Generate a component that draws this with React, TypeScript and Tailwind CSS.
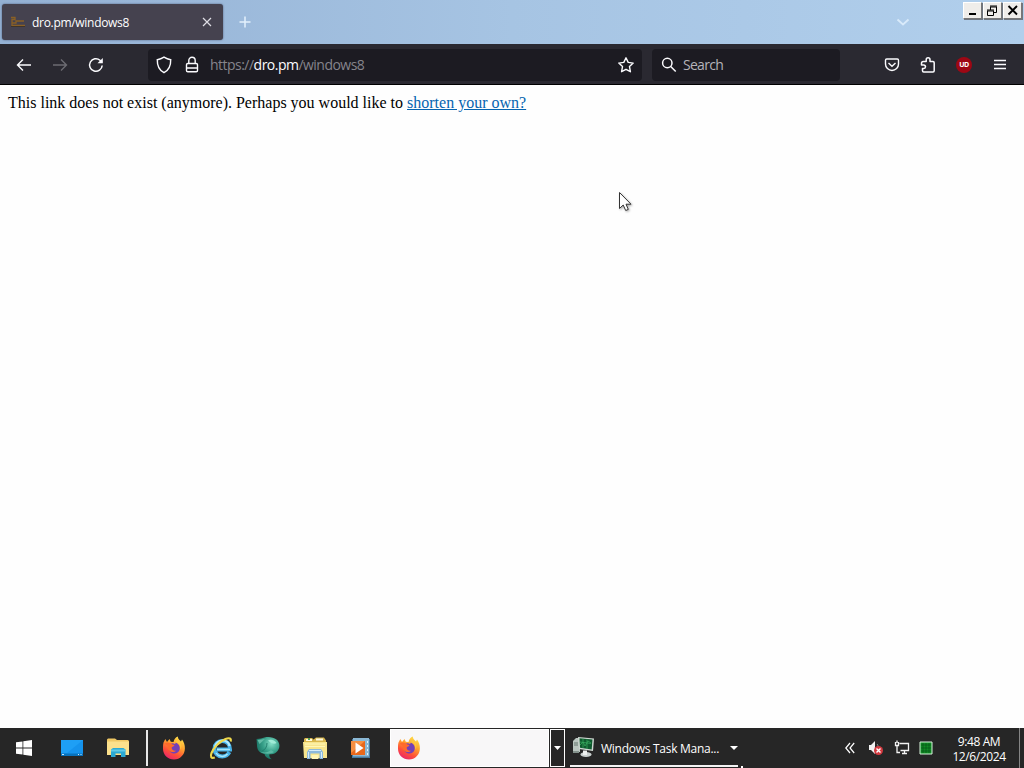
import type { ReactNode } from "react";

const uiFont = "font-['Open_Sans','Noto_Sans',sans-serif]";

function FirefoxIcon() {
  return (
    <svg width="24" height="24" viewBox="0 0 24 24">
      <defs>
        <linearGradient id="fox" x1="0.8" y1="0.05" x2="0.3" y2="1">
          <stop offset="0" stopColor="#ffe14a" />
          <stop offset="0.4" stopColor="#ff9a2e" />
          <stop offset="0.7" stopColor="#ff5038" />
          <stop offset="1" stopColor="#e8246c" />
        </linearGradient>
      </defs>
      <path
        d="M1.500 6.500 3.300 3l1.700 3L7.500 3l1.300 2.800 2.700.2c.7-3 2-4.800 4.300-5.500.1 2.500 2 3.500 3.200 5l1-2c2 2.400 3 5.800 2.900 9C22.800 18.800 18 23.500 12 23.500S1 19 1 12.700c0-2.400 0-4.200.5-6.200Z"
        fill="url(#fox)"
      />
      <path d="M8 8.500c1.500-1.500 3.500-1.500 5-.5l1-1.500c3 1.500 4.500 4.500 3.500 7.500-.8 2.300-2.700 3.500-5 3.500-3 0-5.500-2-5.500-5 0-1.500.3-3 1-4Z" fill="#7440b8" />
      <path
        d="M2.500 7.500c2.500-1.700 5.700-1.400 8 1l2 .4c-.4 1.500-2.500 1.600-2.800 2.400-.4 2.500 2 4 4.400 3.400-1.500 1.800-5 2-6.900-.2C5 12.300 5.800 10 5.800 10Z"
        fill="#ff6a2b"
      />
      <path d="M14 6.500c3.500.4 5 3.500 4 7 2-1.500 2-5.500-.4-8.200L15.500 3Z" fill="#ffc53d" />
    </svg>
  );
}

function StartIcon() {
  return (
    <svg width="16" height="16" viewBox="0 0 16 16" fill="#fff">
      <path d="M0 2.300 6.500 1.400V7.500H0ZM7.300 1.300 16 0v7.500H7.300ZM0 8.400h6.500v6.200L0 13.700ZM7.300 8.400H16V16l-8.700-1.300Z" />
    </svg>
  );
}

function DesktopIcon() {
  return (
    <svg width="22" height="16" viewBox="0 0 22 16">
      <path d="M0 0h22v16H0Z" fill="#1593ed" />
      <path d="M0 0h22L6 13H0Z" fill="#1e9ff5" />
      <path d="M0 13.500h22V16H0Z" fill="#0872bd" />
      <path d="M1 14.500h2M17 14.500h1M19.500 14.500h1" stroke="#c9eaff" />
    </svg>
  );
}

function ExplorerIcon() {
  return (
    <svg width="22" height="20" viewBox="0 0 22 20">
      <path d="M0 1.500 1 .5h7l2 1.500h11l1 1V17H0Z" fill="#f0c865" />
      <path d="M0 3.500h22V17H0Z" fill="#fbe08c" />
      <path d="M4 11.500 6 10h10.500l2 1.500V19H14v-3.500H8.500V19H4Z" fill="#2ba9d3" />
      <path d="M4 11.500h14.500v2H4Z" fill="#62cae6" />
    </svg>
  );
}

function InternetExplorerIcon() {
  return (
    <svg width="24" height="24" viewBox="0 0 24 24" fill="none">
      <path
        d="M20.300 16.200c-1.300 2.700-4 4.300-7 4.300-4.400 0-7.800-3.400-7.800-7.800S8.900 5 13.300 5c4.700 0 7.700 3.400 7.700 8.500H8"
        stroke="#48b3e8"
        strokeWidth="4"
      />
      <path d="M6 11c.7-4 4-6.500 7.300-6.500 3.500 0 6.500 2 7.200 5.500" stroke="#b5ebff" strokeWidth="2.200" />
      <path d="M8 13.500h13M7 17c2 3.500 8 5 11.500 1" stroke="#a8e6fb" strokeWidth="1.500" />
      <path
        d="M21.500 5.500c1.200-3-1-4.200-5-2.500C10 5.700 4.500 12 2.500 17c-1.400 3.700-.5 5.800 3.300 4.500"
        stroke="#f0d94c"
        strokeWidth="2.100"
      />
    </svg>
  );
}

function OrbIcon() {
  return (
    <svg width="24" height="24" viewBox="0 0 24 24">
      <defs>
        <radialGradient id="orb" cx="0.65" cy="0.3" r="0.75">
          <stop offset="0" stopColor="#86e0c8" />
          <stop offset="0.5" stopColor="#369f88" />
          <stop offset="1" stopColor="#12695c" />
        </radialGradient>
      </defs>
      <path
        d="M.5 3 5 2.500C10 0 17 .5 20.500 3.500c4 3.500 4 9.500-.5 13-2.400 1.700-5 2-6.500 1.800-.7 2 .5 3.700 2.300 5-4.300-.4-6.800-2.300-7.300-5.300C3.500 17 1 14 1 9.500Z"
        fill="url(#orb)"
      />
      <path d="M6 15c3-1 5-4 5-8" stroke="#23806f" fill="none" />
      <path d="M1.500 4 9 3 3.500 8Z" fill="#63bba6" />
      <path d="M12 4.500c3-1.500 6-.5 8.500 2.500-2 1.500-5 1-8.500-2.500Z" fill="#a0ecd7" />
      <path d="M3 15c3 2 9 2 12-1l3 2c-3 2-9 3-15-1Z" fill="#5cb8a4" />
    </svg>
  );
}

function LibraryFolderIcon() {
  return (
    <svg width="24" height="23" viewBox="0 0 24 23">
      <path d="M1 2 2 1h7l1.500 1.500L13 .5h8l2 3V21H1Z" fill="#d9b74d" />
      <path d="M3 2h6v2H3ZM13 1.500h7v2h-7Z" fill="#fffbe0" />
      <path d="M5 1h2v2H5Z" fill="#4f9e54" />
      <path d="M0 5h24v16H1Z" fill="#f7e58e" />
      <path d="M2 7h20M2 9.500h20" stroke="#fff7b9" />
      <path d="M4 15 6 12h12l2 3v7h-3.500v-5.500h-9V22H4Z" fill="#8cb9dc" />
      <path d="M6 13.500h12M5.500 15v6M18.500 15v6" stroke="#d5ecfa" />
      <path d="M8.500 18h7v4h-7Z" fill="#fff5b6" />
    </svg>
  );
}

function MediaPlayerIcon() {
  return (
    <svg width="22" height="21" viewBox="0 0 22 21">
      <path d="M2 1h18v19H2Z" fill="#47799f" />
      <path d="M3 0h16v18.500H3Z" fill="#8bb8d5" />
      <path d="M17 3h1v2h-1ZM17 7h1v2h-1ZM17 11h1v2h-1ZM17 15h1v2h-1Z" fill="#dcf2fd" />
      <path d="M1 3h14v14H1Z" fill="#e8681c" />
      <path d="M1 3h14L1 15Z" fill="#f58f42" />
      <path d="M5.500 4.500 13.500 10l-8 5.500Z" fill="#fff" />
    </svg>
  );
}

function TaskManagerIcon() {
  return (
    <svg width="23" height="23" viewBox="0 0 23 23">
      <path d="M1 5 4 2h4v14H1Z" fill="#b9c5bf" />
      <path d="M2 7h4M2 9h4" stroke="#65766f" />
      <path d="m6 1 16 1.500-1 12.500-14-2Z" fill="#cfd8d2" />
      <path d="m7.500 2.200 13 1.300-.8 10-11.700-1.700Z" fill="#0f5a2e" />
      <path d="m8 9 3-3 2 4 3-5 3 2M11 2.800v9M15 3.500v9.500M8 6l11 1.500" stroke="#35a65c" strokeWidth=".8" fill="none" />
      <ellipse cx="14" cy="18.500" rx="5.500" ry="2.500" fill="#cbd1d0" />
      <path d="M11 14.500h4V19h-4Z" fill="#eef1f0" />
      <path d="M1 15h6v2H1Z" fill="#83918b" />
    </svg>
  );
}

function WindowButton({ label, children }: { label: string; children: ReactNode }) {
  return (
    <button
      aria-label={label}
      className="flex h-[17px] items-center justify-center border border-t-white border-l-white border-r-[#777] border-b-[#777] bg-[#efedea] shadow-[1px_1px_0_#6f7680]"
    >
      <svg width="17" height="15" viewBox="0 0 17 15" fill="none" stroke="#000">
        {children}
      </svg>
    </button>
  );
}

function TabStrip() {
  return (
    <div className="flex h-11 items-start bg-gradient-to-r from-[#94b1d4] via-[#a6c4e3] to-[#b1cfec]">
      <div className="mt-1 ml-0.5 flex h-9 w-[221px] items-center rounded-[3px] bg-[#45424f] pl-2 text-white shadow-[0_0_2px_#4a5878]">
        <svg width="16" height="16" viewBox="0 0 16 16" fill="none">
          <path d="M1 3.500h4v2H2v6h13M2 9h4v-2h8" stroke="#8a6025" strokeWidth="1.300" />
          <path d="M1 12.500h14" stroke="#3e342b" />
        </svg>
        <span className="mt-0.5 ml-1.5 w-[163px] text-[12px] tracking-[-0.3px] whitespace-nowrap">dro.pm/windows8</span>
        <svg className="ml-1" width="16" height="16" viewBox="0 0 16 16" stroke="#dedde4" strokeWidth="1.200">
          <path d="m4 4 8 8M12 4l-8 8" />
        </svg>
      </div>
      <svg className="mt-[14px] ml-[14px]" width="16" height="16" viewBox="0 0 16 16" stroke="#e3f1fd" strokeWidth="1.500">
        <path d="M8 2.500v11M2.500 8h11" />
      </svg>
      <svg className="mt-[14px] ml-auto" width="16" height="16" viewBox="0 0 16 16" fill="none" stroke="#d9eafa" strokeWidth="1.800">
        <path d="m2.500 5.500 5.500 5 5.500-5" />
      </svg>
      <div className="mt-0.5 mr-0.5 ml-[52px] flex gap-px">
        <WindowButton label="Minimize">
          <path d="M5 11h7" strokeWidth="2" />
        </WindowButton>
        <WindowButton label="Restore">
          <path d="M6 3h7M6 4h7M6.500 4v3M12.500 4v5.500H10M3 7h7M3 8h7M3.500 8v4.500h6V8" />
        </WindowButton>
        <WindowButton label="Close">
          <path d="m4.500 3 8.500 8.500M13 3l-8.500 8.500" strokeWidth="1.900" />
        </WindowButton>
      </div>
    </div>
  );
}

function Toolbar() {
  return (
    <div className="flex h-[41px] items-center border-b border-black bg-[#2a2931] pt-px text-white">
      <svg className="ml-4" width="16" height="16" viewBox="0 0 16 16" fill="none" stroke="#fbfbfe" strokeWidth="1.400">
        <path d="M15 8H1.500M7 2.500 1.500 8 7 13.500" />
      </svg>
      <svg className="ml-5" width="16" height="16" viewBox="0 0 16 16" fill="none" stroke="#6c6b72" strokeWidth="1.400">
        <path d="M1 8h13.500M9 2.500l5.500 5.500L9 13.500" />
      </svg>
      <svg className="ml-5" width="16" height="16" viewBox="0 0 16 16" fill="none" stroke="#fbfbfe" strokeWidth="1.500">
        <path d="M14.200 8.500A6.300 6.300 0 1 1 12 3.200L14 5" />
        <path d="M14.800 1v5.300H9.500Z" fill="#fbfbfe" stroke="none" />
      </svg>

      {/* Address bar */}
      <div className="ml-11 flex h-8 w-[494px] items-center rounded-sm bg-[#1c1b22] pl-2">
        <svg width="16" height="18" viewBox="0 0 16 18" fill="none" stroke="#fbfbfe" strokeWidth="1.400">
          <path d="M8 1.200c2 1.300 4.200 2.200 6.700 2.500.2 5.800-1.700 10.300-6.700 13C3 14 1.100 9.500 1.300 3.700 3.800 3.400 6 2.500 8 1.200Z" />
        </svg>
        <svg className="ml-3" width="16" height="18" viewBox="0 0 16 18" fill="none" stroke="#fbfbfe" strokeWidth="1.400">
          <rect x="2.500" y="7.500" width="11" height="8.300" rx="1.300" />
          <path d="M4.800 7.500V4.500a3.200 3.200 0 0 1 6.400 0v3M3 12h10" />
        </svg>
        <span className="ml-2.5 text-[14px] tracking-[-0.52px] whitespace-nowrap text-[#85848c]">
          https://<span className="text-[#fbfbfe]">dro.pm</span>/windows8
        </span>
        <svg className="mr-2 ml-auto" width="16" height="16" viewBox="0 0 16 16" fill="none" stroke="#fbfbfe" strokeWidth="1.400" strokeLinejoin="round">
          <path d="m8 .8 2.200 4.600 5 .7-3.700 3.500.9 5.100L8 12.300l-4.400 2.400.9-5.100L.8 6.100l5-.7Z" />
        </svg>
      </div>

      {/* Search bar */}
      <div className="ml-2.5 flex h-8 w-[188px] items-center rounded-sm bg-[#1c1b22] pl-[9px]">
        <svg width="16" height="16" viewBox="0 0 16 16" fill="none" stroke="#fbfbfe" strokeWidth="1.500">
          <circle cx="6.300" cy="6" r="4.700" />
          <path d="m9.700 9.500 5 5" />
        </svg>
        <span className="ml-1.5 text-[14px] tracking-[-0.72px] text-[#b4b3ba]">Search</span>
      </div>

      <div className="mr-4 ml-auto flex items-center gap-5">
        <svg width="16" height="16" viewBox="0 0 16 16" fill="none" stroke="#fbfbfe" strokeWidth="1.400">
          <path d="M2.700 2h10.600c.8 0 1.200.5 1.200 1.300V7a6.500 6.500 0 0 1-13 0V3.300C1.500 2.500 1.900 2 2.700 2Z" />
          <path d="m4.500 6 3.500 3.300L11.500 6" />
        </svg>
        <svg width="16" height="16" viewBox="0 0 16 16" fill="none" stroke="#fbfbfe" strokeWidth="1.500" strokeLinejoin="round">
          <path d="M6.200 4.500V2.700a1.900 1.900 0 0 1 3.800 0v1.800h3c.8 0 1.200.4 1.200 1.200v8.100c0 .8-.4 1.200-1.200 1.200H3.700c-.8 0-1.200-.4-1.200-1.200v-2.300h1.300a1.700 1.700 0 0 0 0-3.400H1.500V6.500c0-1.200.6-2 1.800-2Z" />
        </svg>
        <span className="flex size-4 items-center justify-center rounded-full bg-[#9e0714] text-[7px] leading-none font-bold tracking-[-0.5px] text-white">
          UD
        </span>
        <svg width="16" height="16" viewBox="0 0 16 16" stroke="#fbfbfe" strokeWidth="1.300">
          <path d="M2 3.500h12M2 7.500h12M2 11.500h12" />
        </svg>
      </div>
    </div>
  );
}

function Taskbar() {
  return (
    <div className="flex h-10 items-center bg-[#262626] text-white">
      <div className="flex w-[146px] items-center pl-4">
        <StartIcon />
        <div className="ml-[29px]">
          <DesktopIcon />
        </div>
        <div className="ml-6">
          <ExplorerIcon />
        </div>
      </div>
      <div className="h-9 w-0.5 bg-[#e8e8e8]" />
      <div className="flex w-[242px] items-center gap-[23px] pl-[14px]">
        <FirefoxIcon />
        <InternetExplorerIcon />
        <OrbIcon />
        <LibraryFolderIcon />
        <MediaPlayerIcon />
      </div>

      {/* Open windows */}
      <div className="flex h-[38px] w-[159px] items-center border border-white bg-[#f8f7f8] pl-1.5">
        <FirefoxIcon />
      </div>
      <div className="ml-px flex h-[38px] w-[15px] items-center justify-center border border-white">
        <svg width="7" height="4" viewBox="0 0 7 4" fill="#fff">
          <path d="M0 0h7L3.500 4Z" />
        </svg>
      </div>
      <div className="ml-[5px] flex h-[38px] w-[168px] items-center border-b-2 border-[#f4f4f4] pl-0.5">
        <TaskManagerIcon />
        <span className="mt-1 ml-1.5 text-[12px] tracking-[-0.27px] whitespace-nowrap">Windows Task Mana...</span>
        <svg className="mt-0.5 ml-auto shrink-0" width="8" height="4" viewBox="0 0 8 4" fill="#fff">
          <path d="M0 0h8L4 4Z" />
        </svg>
      </div>
      <div className="ml-[3px] size-0.5 self-end bg-white" />

      {/* Notification area */}
      <div className="ml-auto flex items-center">
        <svg width="10" height="12" viewBox="0 0 10 12" fill="none" stroke="#fff" strokeWidth="1.200">
          <path d="M5 1 .8 6 5 11M9.200 1 5 6l4.200 5" />
        </svg>
        <svg className="ml-[13px]" width="16" height="16" viewBox="0 0 16 16">
          <path d="M1 5h2l4-4v13l-4-4H1Z" fill="#f2f2f2" />
          <path d="M9 4c1 1 1 2 1 3" stroke="#999" fill="none" />
          <circle cx="10.500" cy="10.500" r="4.500" fill="#d33a40" />
          <path d="m8.500 8.500 4 4m0-4-4 4" stroke="#fff" strokeWidth="1.400" />
        </svg>
        <svg className="ml-2.5" width="16" height="16" viewBox="0 0 16 16" fill="none" stroke="#f3f3f3">
          <path d="M5.500 3.500h9v7h-8M8 13.500h5M10.500 11v2M1.500 2v3.500h3V2M3 .500V3M3 5.500v7h3" strokeWidth="1.300" />
        </svg>
        <svg className="ml-[9px]" width="14" height="14" viewBox="0 0 14 14">
          <path d="M1 1h12v12H1Z" fill="#108c24" stroke="#d6f2da" />
          <path d="M4 2v10M7 2v10M10 2v10M2 4h10M2 7h10M2 10h10" stroke="#075817" strokeWidth=".7" />
        </svg>
        <div className="mt-0.5 ml-[17px] w-[58px] text-center text-[12px] leading-[15px] tracking-[-0.4px] whitespace-nowrap">
          <div>9:48 AM</div>
          <div>12/6/2024</div>
        </div>
        <div className="ml-[11px] h-10 w-[5px] border-l border-[#858585]" />
      </div>
    </div>
  );
}

export default function App() {
  return (
    <div className={`relative flex h-screen w-full flex-col overflow-hidden bg-white ${uiFont}`}>
      <TabStrip />
      <Toolbar />
      <main className="flex-1 bg-[#fefefe] p-2 font-['Liberation_Serif',serif] text-[16px] leading-[20px] text-black">
        This link does not exist (anymore). Perhaps you would like to{" "}
        <a href="#" className="text-[#0664b0] underline">
          shorten your own?
        </a>
      </main>
      <Taskbar />

      {/* Mouse pointer */}
      <svg className="absolute top-[191px] left-[618px] drop-shadow-[1px_1px_1px_#0005]" width="15" height="22" viewBox="0 0 15 22">
        <path d="M1.500 1.500v16l3.700-3.500 2.500 5.500 2.600-1.100L8 13.200h5Z" fill="#fff" stroke="#333" />
      </svg>
    </div>
  );
}
